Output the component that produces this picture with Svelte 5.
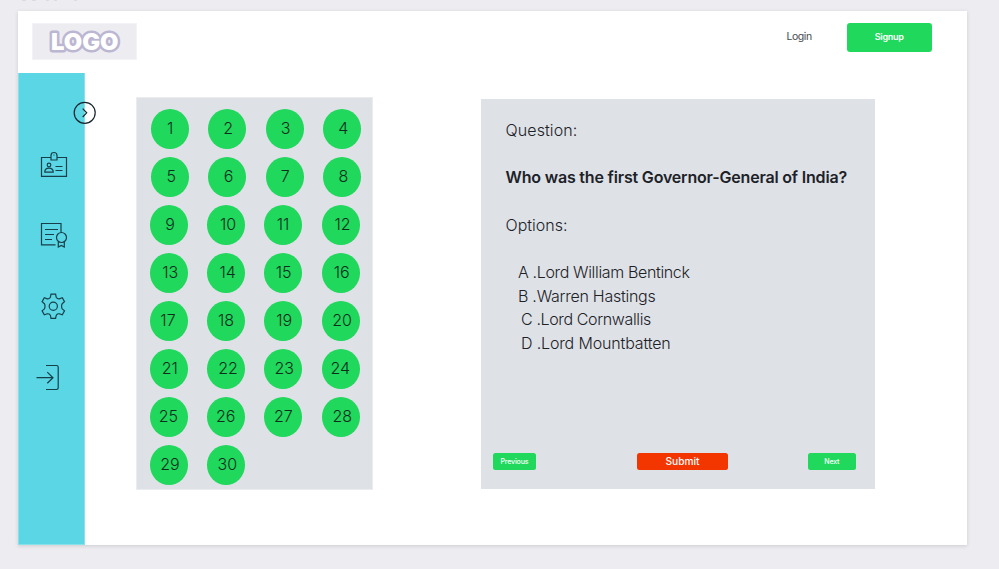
<script>
  const dx = [0, 0.8, 0.8, 1.2, 1, 1.1, 0.5, 1.2, 1.2, 1.9, -0.4, 1.9, 1.5, 1.5, 0.2, 1.1, -0.8, -0.1, 0.9, 1.3, 0.9, 1.9, 0.9, -0.4, -0.5, -0.4, -0.1, 1.6, 1.2, 1.2];
  const rows = Array.from({ length: 8 }, (_, r) =>
    dx.slice(r * 4, r * 4 + 4).map((d, c) => ({ n: r * 4 + c + 1, d }))
  );
  const options = [
    { t: 'A .Lord William Bentinck', x: 12.5, s: -0.35 },
    { t: 'B .Warren Hastings', x: 12.5, s: -0.26 },
    { t: 'C .Lord Cornwallis', x: 15.5, s: -0.37 },
    { t: 'D .Lord Mountbatten', x: 15.5, s: -0.15 }
  ];
</script>

<div class="canvas">
  <svg class="specks" width="80" height="2" viewBox="0 0 80 2"><path d="M22 .5h4M32 .5h4M46 .5h3M54 .5h3M74 .5h3" /></svg>
  <main class="frame">
    <header>
      <div class="logo">
        <svg width="104" height="36" viewBox="0 0 104 36">
          <text x="18" y="26" textLength="67.5" lengthAdjust="spacingAndGlyphs">LOGO</text>
        </svg>
      </div>
      <nav>
        <span class="login">Login</span>
        <button class="signup">Signup</button>
      </nav>
    </header>
    <div class="body">
      <aside>
        <svg class="toggle" width="24" height="24" viewBox="0 0 24 24"><circle cx="11.7" cy="11.8" r="10.5" /><path d="M9.7 7.6l4 4.2-4 4.2" /></svg>
        <svg class="icon" width="28" height="28" viewBox="0 0 28 28">
          <path d="M10.5 7.5H1.5v18.8h25V7.5h-9M11 10V5.5q0-3 3-3t3 3V10zM13.4 5h1M15.5 16.5h7M15.5 20.5h7" />
          <circle cx="9" cy="15" r="1.8" /><path d="M4.8 22.2q0-4 4.2-4t4.2 4z" />
        </svg>
        <svg class="icon" width="28" height="28" viewBox="0 0 28 28">
          <path d="M21 11.5V2.5H1.5v21.3h14M5 8.5h13M5 13.5h9M5 18.5h7M18.3 20.7V26l3-1.6 3 1.6v-5.3" />
          <circle cx="21.5" cy="16.5" r="5" />
        </svg>
        <svg class="icon" width="28" height="28" viewBox="0 0 28 28">
          <path d="M11 2.2h4.6l.6 3q.4.8 1.3 1.3t1.8.3l3-1 2.2 3.9-2.3 2q-.6.8-.6 2.6t.6 2.6l2.3 2-2.2 3.9-3-1q-.9-.2-1.8.3t-1.3 1.3l-.6 3H11l-.6-3q-.4-.8-1.3-1.3t-1.8-.3l-3 1-2.2-3.9 2.3-2q.6-.8.6-2.6t-.6-2.6l-2.3-2 2.2-3.9 3 1q.9.2 1.8-.3t1.3-1.3z" />
          <circle cx="13.3" cy="14.3" r="4.1" />
        </svg>
        <svg class="icon exit" width="28" height="28" viewBox="0 0 28 28">
          <path d="M11 2.5h10.5q1.7 0 1.7 1.7v20.6q0 1.7-1.7 1.7H11M1.5 14.7H18M12.3 9.1l5.7 5.6-5.7 5.6" />
        </svg>
      </aside>
      <section class="numbers">
        {#each rows as row, r}
          <div class="row" class:shift={r > 1}>
            {#each row as item}
              <div class="dot"><span style="transform: translateX({item.d}px)">{item.n}</span></div>
            {/each}
          </div>
        {/each}
      </section>
      <section class="question">
        <p>Question:</p>
        <p class="ask">Who was the first Governor-General of India?</p>
        <p>Options:</p>
        <ul>
          {#each options as o}
            <li style="padding-left: {o.x}px; letter-spacing: {o.s}px">{o.t}</li>
          {/each}
        </ul>
        <footer>
          <button class="prev">Previous</button>
          <button class="submit">Submit</button>
          <button class="next">Next</button>
        </footer>
      </section>
    </div>
  </main>
</div>

<style>
  :global(body) { margin: 0; background: #edecf1; }
  * { box-sizing: border-box; }
  .canvas { position: relative; width: 999px; height: 569px; padding: 11px 0 0 18px; overflow: hidden; background: #edecf1; font-family: Inter, "Liberation Sans", sans-serif; color: #1c2228; }
  .specks { position: absolute; left: 0; top: 0; stroke: #dddce1; }
  .frame { width: 949px; height: 534px; background: #fff; box-shadow: 0 1px 4px rgba(0, 0, 0, 0.14); }
  header { display: flex; justify-content: space-between; height: 62px; padding: 12px 35px 0 14px; }
  .logo { width: 105px; height: 37px; background: #edecf1; border: 1px solid #f3f2f6; }
  .logo svg { display: block; }
  .logo text { font: 900 23.5px Inter, sans-serif; fill: #fff; stroke: #bbb6d2; stroke-width: 5px; stroke-linejoin: round; paint-order: stroke; }
  nav { display: flex; }
  .login { width: 60px; font-size: 10.5px; line-height: 28px; letter-spacing: -0.45px; color: #454a50; }
  button { display: block; padding: 0; border: 0; color: #fff; font-family: inherit; text-align: center; background: #1fd85c; }
  .signup { width: 85.5px; height: 28.5px; border-radius: 3px; font-size: 9px; line-height: 28px; font-weight: 600; letter-spacing: -0.25px; }
  .body { display: flex; height: 472px; }
  aside { position: relative; display: flex; flex-direction: column; width: 67px; height: 472px; padding: 77px 0 0 21px; gap: 43px; background: #5ad6e4; border: 1px solid #86e1eb; border-top-width: 0; }
  aside svg { display: block; fill: none; stroke: #173f49; stroke-width: 1.2; }
  .icon.exit { margin-left: -5px; }
  aside .toggle { position: absolute; left: 54px; top: 28px; stroke: #17252c; }
  .numbers { width: 237px; height: 393px; margin: 24px 0 0 51px; padding-top: 11px; background: #dee1e6; border: 1px solid #eaecef; }
  .row { display: flex; gap: 19.3px; height: 48px; padding-left: 14.2px; }
  .row.shift { padding-left: 12.8px; }
  .dot { display: flex; flex: none; align-items: center; justify-content: center; width: 38px; height: 39.5px; padding-bottom: 1px; border-radius: 50%; background: #1fd85c; font-size: 16px; line-height: 20px; font-weight: 300; color: #0f2d1c; }
  .question { width: 394px; height: 390px; margin: 26px 0 0 108px; padding: 19px 19px 0 24.5px; background: #dee1e6; font-size: 16px; line-height: 24px; font-weight: 300; }
  p { margin: 0; height: 47.3px; white-space: nowrap; }
  p:first-child { letter-spacing: 0.1px; }
  .ask { font-weight: 600; letter-spacing: -0.18px; }
  ul { height: 193px; margin: 0; padding: 0; list-style: none; }
  li { height: 23.8px; white-space: nowrap; }
  footer { display: flex; margin-left: -12.5px; }
  footer button { height: 17.5px; border-radius: 2.5px; line-height: 17.5px; font-weight: 500; }
  .prev { width: 43px; font-size: 7px; letter-spacing: -0.15px; }
  .submit { width: 90.5px; margin: 0 80px 0 101.5px; background: #f33600; font-size: 10.2px; }
  .next { width: 48.5px; font-size: 7px; letter-spacing: -0.15px; }
</style>
